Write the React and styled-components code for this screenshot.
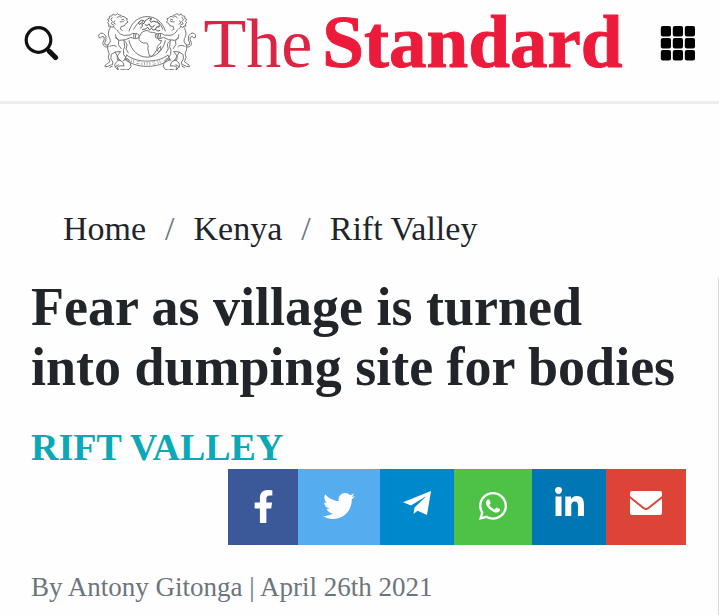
import React from 'react';
import styled, { createGlobalStyle } from 'styled-components';
import {
  FaFacebookF,
  FaTwitter,
  FaWhatsapp,
  FaLinkedinIn,
} from 'react-icons/fa';

const GlobalStyle = createGlobalStyle`
  * {
    box-sizing: border-box;
  }
  body {
    margin: 0;
    background: #fefefe;
    color: #212529;
    font-family: 'Liberation Serif', 'Times New Roman', serif;
  }
`;

const Header = styled.header`
  display: flex;
  align-items: flex-start;
  justify-content: space-between;
  height: 104px;
  padding: 10px 23px 0 24px;
  border-bottom: 3px solid #ededed;
`;

const IconButton = styled.button`
  display: flex;
  margin-top: 15px;
  padding: 0;
  border: 0;
  background: none;
  color: #111;
  cursor: pointer;
`;

const Brand = styled.a`
  display: flex;
  align-items: flex-start;
  gap: 7px;
  color: #ed1b3b;
  text-decoration: none;
`;

const Wordmark = styled.span`
  display: flex;
  align-items: baseline;
  gap: 10px;
  line-height: 64px;
  white-space: nowrap;
`;

const Light = styled.span`
  color: #dc2444;
  font-size: 70px;
`;

const Heavy = styled.strong`
  font-size: 75px;
  font-weight: 700;
  -webkit-text-stroke: 1px #ed1b3b;
`;

const Page = styled.div`
  padding-top: 97px;
`;

const Breadcrumb = styled.ol`
  display: flex;
  gap: 19px;
  margin: 0;
  padding: 8px 63px;
  list-style: none;
  font-size: 34px;
  line-height: 40px;
`;

const Crumb = styled.li`
  display: flex;
  gap: 19px;

  & + &::before {
    content: '/';
    color: #6c757d;
  }
`;

const CrumbLink = styled.a`
  color: inherit;
  text-decoration: none;
`;

const Columns = styled.div`
  display: flex;
  margin-top: 20px;
`;

const Article = styled.main`
  flex: 1;
  padding: 0 32px 10px 31px;
`;

const Side = styled.aside`
  border-left: 1px solid #d9dade;
`;

const Title = styled.h1`
  margin: 0;
  font-size: 54px;
  font-weight: 700;
  line-height: 60px;
  text-wrap: balance;
`;

const Section = styled.a`
  display: block;
  margin-top: 28px;
  color: #0ba8b8;
  font-size: 38px;
  font-weight: 700;
  line-height: 44px;
  text-decoration: none;
`;

const ShareBar = styled.div`
  display: flex;
  justify-content: flex-end;
`;

const ShareButton = styled.button`
  display: flex;
  align-items: center;
  justify-content: center;
  width: ${(props) => props.$width}px;
  height: 76px;
  padding: 0 0 ${(props) => (props.$raised ? 8 : 2)}px;
  border: 0;
  background: ${(props) => props.$color};
  color: #fff;
  cursor: pointer;
`;

const Byline = styled.p`
  margin: 24px 0 0;
  color: #6c757d;
  font-size: 27px;
  line-height: 36px;
`;

const SearchIcon = () => (
  <svg width="36" height="36" viewBox="0 0 36 36" fill="none" stroke="currentColor">
    <circle cx="14.5" cy="15" r="12.3" strokeWidth="3.2" />
    <path d="M23.5 24.5 26 27" strokeWidth="4" />
    <path d="M26 27 31.5 32.5" strokeWidth="5.2" strokeLinecap="round" />
  </svg>
);

const cells = [0, 12, 24];

const GridIcon = () => (
  <svg width="36" height="36" viewBox="0 0 36 36" fill="#000">
    {cells.map((y) =>
      cells.map((x) => (
        <rect key={`${x}-${y}`} x={x + 0.8} y={y + 1} width="10.2" height="10.4" rx="2" />
      ))
    )}
  </svg>
);

const Lion = () => (
  <>
    <path d="M75 71c-5-2-7-6-4-9l-7 5-5-5-5 2 1-8-4-3 4-5-4-6 6-2 0-7 7-1 4-6 6 4 7-5 5 4 6 1 3 4 7 0 4 5 5 1-2 6 4 5-7 4-4 7-10 2-2 8 6 4" />
    <path d="M79 38c4-6 10-5 14-1m1 7 6-2m-11 8c5 1 9 0 12-3M65 37l-4 7 5 5-4 7 7 3m4-12-4 6 6 4" />
    <path d="M61 64c-6 9-9 18-7 27 2 9 7 12 5 20-7 8-10 14-7 24l4 12-3 10 5 14-7 5-7 5-1 5 9-1 8-4 6-1 1-8-6-10 1-13 13-8 15-1" />
    <path d="M79 74c5 10 13 16 23 17l17-1 8-5 14 1 6 4-2 8-8 3-8-1-7-3-16 7-19 2-12-8" />
    <path d="M75 89c1 9 4 14 10 18l-1 12 8 12m9-21 2 15-4 11 1 13 9 14 11 12 2 11-6 8-9 2-11-2-9 3-8-4 4-8 9-2 9 1-3-11-12-9-7-13-5-9" />
    <path d="M99 106c6 3 10 8 11 14l-3 12 7 12m-25-2-9 12 1 11 9 3m-32-44c7-4 14-4 20 1" />
    <path d="M83 192c-9-1-13-8-8-17l11-11m13 3 13-6 6 8m-44 17 10-6M65 185l-7 3" />
    <path d="M53 126c-10 2-17-3-16-13l4-9-1-8-6-2-4 5-5-1-1-8 6-6 8 1 8 8 0 12-4 9 2 6 8 0" />
    <path d="m131 86-1 11m7-10-2 11" />
  </>
);

const Crest = () => (
  <svg
    width="99"
    height="60"
    viewBox="22 15 300 180"
    fill="none"
    stroke="#6c6c6c"
    strokeWidth="2.8"
    strokeLinejoin="round"
    strokeLinecap="round"
  >
    <path d="M116 78c8-28 30-44 55-44s47 16 55 44M116 107c6 29 28 50 55 50s49-21 55-50" />
    {/* africa */}
    <path d="m151 89 3-6 8-5 12-2 4 5 9 1 10 2 4 6 1 7 5 9 8 1-5 9-8 8-2 11-8 12-7 7-7-1-3-11-2-10 1-10-4-8-11 0-8-4-5-7 1-8z" />
    <path d="m205 131 7-7 0 10-6 8-3-3z" />
    {/* europe and asia */}
    <path
      d="m150 69 7-5-2-7 7-3 2-7 8-5 5-4 8 3-6 4 4 6 8-3 10 3 7 7-1 8-7-1-4 8 8 5 5-2M145 52l8-7 7 1-5 7-7 4zM157 73l9-1 6-6 6 8 7-4 4 5 7-2M165 59l6 2 6-5 4 9 7 1 5-6"
      stroke="#4c4c4c"
    />
    <path d="M130 72c5-8 10-16 18-22m53-3c8 7 14 16 17 25" />
    <path d="M109 151c18 13 39 18 62 18s45-5 63-18M103 164c20 14 41 21 68 21s49-7 69-21M109 151l-6 13m131-13 6 13" />
    <path
      d="M123 163v8m7-6-1 9m11-5 7 2m-8 5 8 1m8-5v9m8-8v8m8-8v8m8-8v8m9-9 5-1m-4 8 7-2m6-9 3 8m4-9 2 7"
      stroke="#aaa"
    />
    <Lion />
    <g transform="translate(342 0) scale(-1 1)">
      <Lion />
    </g>
  </svg>
);

const PlaneIcon = () => (
  <svg width="30" height="26" viewBox="0 0 30 26" fill="currentColor">
    <path d="M29 1 1 12.2 9 15.6 24.5 6 12.5 17.5l-1 6.5 4-3.2 9.5 4.2z" />
  </svg>
);

const EnvelopeIcon = () => (
  <svg width="32" height="26" viewBox="0 0 32 26" fill="currentColor">
    <path d="M2 1h28q2 0 2 2v3L18.2 17q-2.2 1.8-4.4 0L0 6V3q0-2 2-2z" />
    <path d="M0 8.5 13.2 19q2.8 2.1 5.6 0L32 8.5V23q0 2-2 2H2q-2 0-2-2z" />
  </svg>
);

const crumbs = ['Home', 'Kenya', 'Rift Valley'];

const networks = [
  { name: 'Facebook', color: '#3b5998', width: 70, icon: <FaFacebookF size={33} /> },
  { name: 'Twitter', color: '#55acee', width: 82, icon: <FaTwitter size={32} /> },
  { name: 'Telegram', color: '#0088cc', width: 74, raised: true, icon: <PlaneIcon /> },
  { name: 'WhatsApp', color: '#4dc247', width: 78, icon: <FaWhatsapp size={32} /> },
  { name: 'LinkedIn', color: '#0077b5', width: 74, raised: true, icon: <FaLinkedinIn size={33} /> },
  { name: 'Email', color: '#dd4437', width: 80, raised: true, icon: <EnvelopeIcon /> },
];

const App = () => {
  return (
    <>
      <GlobalStyle />
      <Header>
        <IconButton type="button" aria-label="Search">
          <SearchIcon />
        </IconButton>
        <Brand href="#">
          <Crest />
          <Wordmark>
            <Light>The</Light>
            <Heavy>Standard</Heavy>
          </Wordmark>
        </Brand>
        <IconButton type="button" aria-label="Menu">
          <GridIcon />
        </IconButton>
      </Header>
      <Page>
        <nav aria-label="Breadcrumb">
          <Breadcrumb>
            {crumbs.map((crumb) => (
              <Crumb key={crumb}>
                <CrumbLink href="#">{crumb}</CrumbLink>
              </Crumb>
            ))}
          </Breadcrumb>
        </nav>
        <Columns>
          <Article>
            <Title>Fear as village is turned into dumping site for bodies</Title>
            <Section href="#">RIFT VALLEY</Section>
            <ShareBar>
              {networks.map(({ name, color, width, raised, icon }) => (
                <ShareButton
                  key={name}
                  type="button"
                  aria-label={name}
                  $color={color}
                  $width={width}
                  $raised={raised}
                >
                  {icon}
                </ShareButton>
              ))}
            </ShareBar>
            <Byline>By Antony Gitonga | April 26th 2021</Byline>
          </Article>
          <Side />
        </Columns>
      </Page>
    </>
  );
};

export default App;
